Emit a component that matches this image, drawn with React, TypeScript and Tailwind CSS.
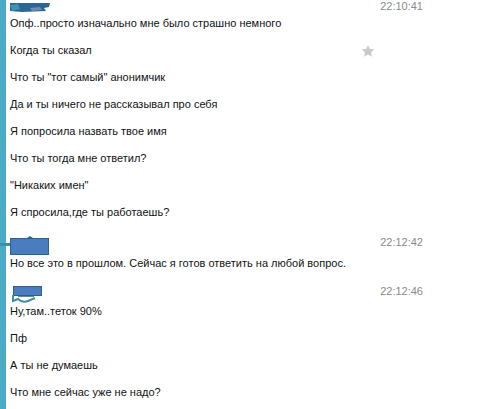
import React from "react";

type Msg = { time: string; name: React.ReactNode; headH: string; headPt: string; lines: string[]; star?: number };

const Name1 = () => (
  <svg width="60" height="14" className="-ml-[10px] overflow-visible">
    <path d="M10 3 L50 3 L49 7 L44 8 L46 11 L22 12 L10 11 Z" fill="#2b6794" />
    <path d="M10 5 L18 4 L20 9 L12 11 Z" fill="#3c95b2" />
    <path d="M30 8 L40 7 L42 10 L32 11 Z" fill="#6b8fb0" />
  </svg>
);

const Name2 = () => (
  <svg width="60" height="20" className="-ml-[10px] overflow-visible">
    <path d="M-4 7 L12 7 L12 10 L-4 10 Z" fill="#3b8fa6" />
    <path d="M27 2 L30 0 L33 2 Z" fill="#2e6b8c" />
    <rect x="10.5" y="2.5" width="38" height="16" fill="#4a7dbf" stroke="#2f5f91" />
  </svg>
);

const Name3 = () => (
  <svg width="60" height="20" className="-ml-[10px] overflow-visible">
    <rect x="13.5" y="1.5" width="28" height="9" fill="#4a7dbf" stroke="#2f5f91" />
    <path d="M13 10 L13 16 L18 14 Q22 18 28 16 L35 13" stroke="#3d8ea4" strokeWidth="2" fill="none" />
    <path d="M18 11 L34 11" stroke="#2a5f84" strokeWidth="1.5" />
  </svg>
);

const messages: Msg[] = [
  {
    time: "22:10:41",
    name: <Name1 />,
    headH: "h-[10px]",
    headPt: "pt-0",
    star: 1,
    lines: [
      "Опф..просто изначально мне было страшно немного",
      "Когда ты сказал",
      "Что ты \"тот самый\" анонимчик",
      "Да и ты ничего не рассказывал про себя",
      "Я попросила назвать твое имя",
      "Что ты тогда мне ответил?",
      "\"Никаких имен\"",
      "Я спросила,где ты работаешь?",
    ],
  },
  {
    time: "22:12:42",
    name: <Name2 />,
    headH: "h-[24px]",
    headPt: "pt-[10px]",
    lines: ["Но все это в прошлом. Сейчас я готов ответить на любой вопрос."],
  },
  {
    time: "22:12:46",
    name: <Name3 />,
    headH: "h-[21px]",
    headPt: "pt-[8px]",
    lines: ["Ну,там..теток 90%", "Пф", "А ты не думаешь", "Что мне сейчас уже не надо?"],
  },
];

function Star() {
  return (
    <svg width="14" height="14" viewBox="0 0 24 24" className="ml-auto mr-[113px]">
      <path d="M12 1.5l3.1 7.2 7.8.6-5.9 5.1 1.8 7.6L12 17.9 5.2 22l1.8-7.6-5.9-5.1 7.8-.6z" fill="#c9c9c9" />
    </svg>
  );
}

export default function App() {
  return (
    <div
      className="w-[488px] h-[409px] bg-white flex overflow-hidden text-[11px] text-[#111]"
      style={{ fontFamily: '"Liberation Sans", Arial, sans-serif' }}
    >
      <div className="w-[6px] shrink-0 bg-[#4babc6]" />
      <div className="flex-1 flex flex-col pl-[4px]">
        {messages.map((m) => (
          <div key={m.time} className="flex flex-col">
            <div className={`flex items-start ${m.headH} ${m.headPt}`}>
              {m.name}
              <span className="ml-auto mr-[65px] leading-[13px] text-[#8a8a8a]">{m.time}</span>
            </div>
            {m.lines.map((l, i) => (
              <div key={i} className="h-[27px] flex items-center whitespace-nowrap">
                <span>{l}</span>
                {m.star === i ? <Star /> : null}
              </div>
            ))}
          </div>
        ))}
      </div>
    </div>
  );
}
